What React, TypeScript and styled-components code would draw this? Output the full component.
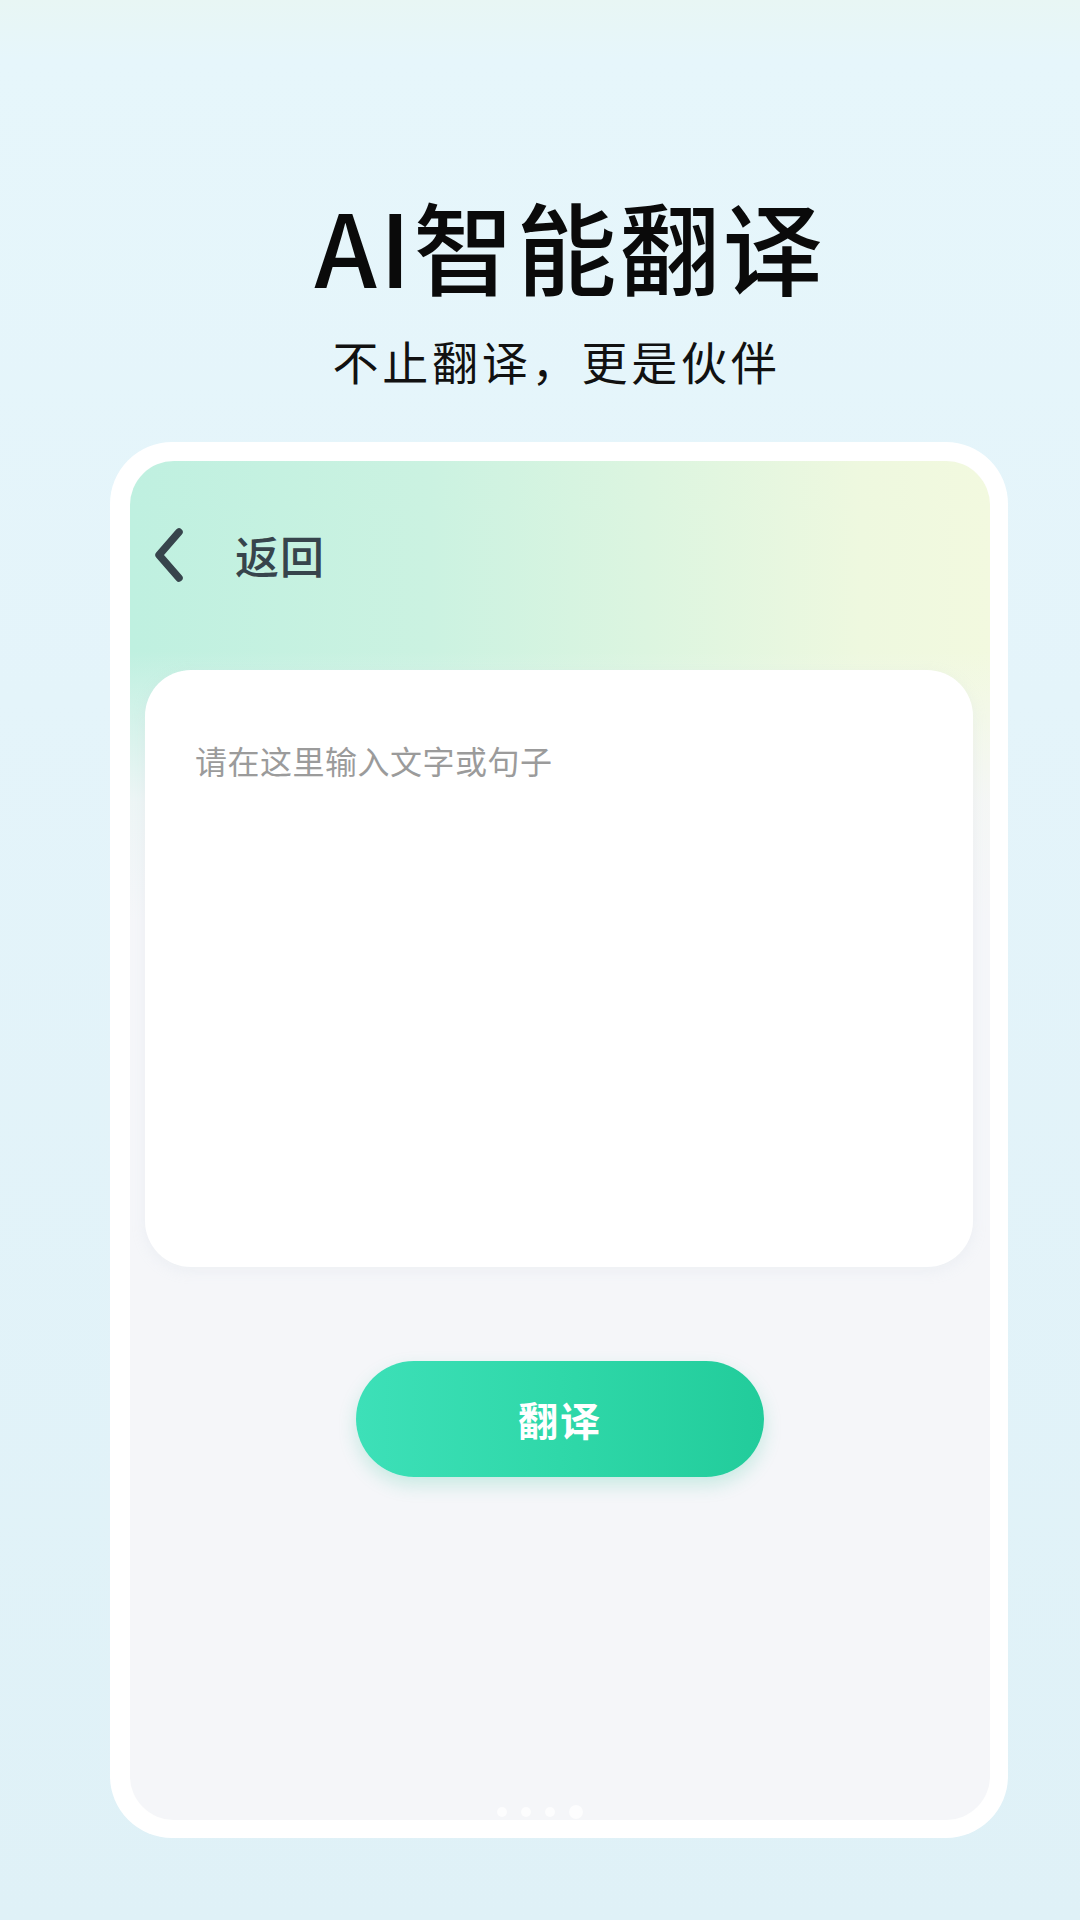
import React from "react";
import styled, { createGlobalStyle } from "styled-components";

const Global = createGlobalStyle`
  html, body { margin: 0; padding: 0; }
  body {
    font-family: "Noto Sans CJK SC", "Noto Sans", sans-serif;
    background: #e3f3f9;
  }
`;

const Page = styled.div`
  width: 1080px;
  height: 1920px;
  overflow: hidden;
  background: linear-gradient(180deg, #e8f6f4 0px, #e6f6fb 60px, #e4f4fa 700px, #dff1f7 1920px);
  display: flex;
  flex-direction: column;
`;

const Title = styled.h1`
  margin: 185px 0 0 0;
  font-size: 100px;
  line-height: 1.2;
  font-weight: 500;
  letter-spacing: 3px;
  color: #0a0a0a;
  text-align: center;
  padding-left: 60px;
`;

const Subtitle = styled.p`
  margin: 28px 0 0 0;
  font-size: 46px;
  line-height: 1.2;
  font-weight: 400;
  letter-spacing: 3.8px;
  color: #111;
  text-align: center;
  padding-left: 33px;
`;

const Frame = styled.div`
  margin: 54px 0 0 110px;
  width: 898px;
  height: 1396px;
  box-sizing: border-box;
  padding: 19px 18px 18px 20px;
  background: #ffffff;
  border-radius: 62px;
`;

const Screen = styled.div`
  height: 100%;
  border-radius: 44px;
  overflow: hidden;
  display: flex;
  flex-direction: column;
  background:
    linear-gradient(180deg, rgba(245, 246, 249, 0) 0px, rgba(245, 246, 249, 0) 190px, rgba(245, 246, 249, 0.85) 340px, #f5f6f9 460px),
    linear-gradient(90deg, #bff0e0 0%, #cbf2e1 35%, #dcf5e0 60%, #eef8df 85%, #f2f9df 100%);
`;

const Header = styled.div`
  height: 188px;
  display: flex;
  align-items: center;
  padding-left: 23px;
  gap: 50px;
`;

const BackText = styled.span`
  font-size: 44px;
  line-height: 1;
  font-weight: 500;
  color: #37444c;
  letter-spacing: 1px;
`;

const Card = styled.div`
  margin: 21px 17px 0 15px;
  height: 597px;
  box-sizing: border-box;
  background: #ffffff;
  border-radius: 46px;
  padding: 71px 50px;
  box-shadow: 0 4px 14px rgba(200, 210, 220, 0.18);
`;

const Placeholder = styled.div`
  font-size: 32px;
  line-height: 1.2;
  color: #9b9b9b;
  letter-spacing: 0.5px;
`;

const ButtonRow = styled.div`
  display: flex;
  justify-content: center;
  margin-top: 94px;
`;

const TranslateButton = styled.button`
  width: 408px;
  height: 116px;
  border: none;
  border-radius: 58px;
  background: linear-gradient(90deg, #3de0b8 0%, #2fd8a9 50%, #22cc9b 100%);
  color: #ffffff;
  font-family: "Noto Sans CJK SC", sans-serif;
  font-size: 40px;
  font-weight: 700;
  letter-spacing: 2px;
  box-shadow: 0 8px 18px rgba(40, 190, 150, 0.22);
  cursor: pointer;
`;

const Dots = styled.div`
  margin-top: auto;
  margin-bottom: 1px;
  display: flex;
  align-items: center;
  justify-content: center;
  gap: 14px;
  padding-right: 40px;
`;

const Dot = styled.span<{ $big?: boolean }>`
  width: ${(p) => (p.$big ? 14 : 10)}px;
  height: ${(p) => (p.$big ? 14 : 10)}px;
  border-radius: 50%;
  background: rgba(255, 255, 255, 0.75);
`;

const BackArrow = () => (
  <svg width="32" height="56" viewBox="0 0 32 56" fill="none">
    <polyline
      points="26,5 6,28 26,51"
      stroke="#37444c"
      strokeWidth="7.5"
      strokeLinecap="round"
      strokeLinejoin="round"
    />
  </svg>
);

export default function App() {
  return (
    <>
      <Global />
      <Page>
        <Title>AI智能翻译</Title>
        <Subtitle>不止翻译，更是伙伴</Subtitle>
        <Frame>
          <Screen>
            <Header>
              <BackArrow />
              <BackText>返回</BackText>
            </Header>
            <Card>
              <Placeholder>请在这里输入文字或句子</Placeholder>
            </Card>
            <ButtonRow>
              <TranslateButton>翻译</TranslateButton>
            </ButtonRow>
            <Dots>
              <Dot />
              <Dot />
              <Dot />
              <Dot $big />
            </Dots>
          </Screen>
        </Frame>
      </Page>
    </>
  );
}
